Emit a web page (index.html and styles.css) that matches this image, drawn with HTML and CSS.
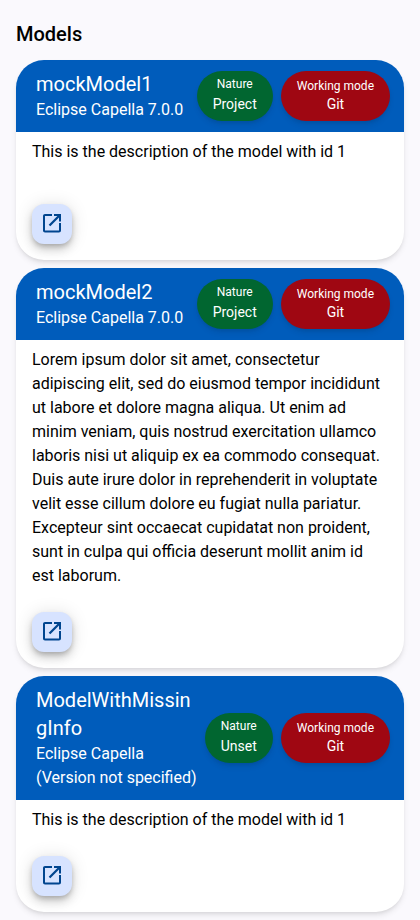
FILE: index.html
```
<!DOCTYPE html>
<html lang="en">
<head>
<meta charset="utf-8">
<title>Models</title>
<link rel="stylesheet" href="styles.css">
</head>
<body>
<svg width="0" height="0" class="sprite" aria-hidden="true">
  <symbol id="open" viewBox="0 0 24 24"><path d="M19 19.5H5V5h7V3H5c-1.11 0-2 .9-2 2v14.5c0 1.1.89 2 2 2h14c1.1 0 2-.9 2-2V12h-2v7.500zM14 3v2h3.400l-8.700 8.700 1.600 1.600L19 6.600V10.500h2V3h-7z"/></symbol>
</svg>
<main class="page">
  <h2 class="heading">Models</h2>
  <div class="list">
    <article class="card">
      <header class="head">
        <div class="info"><div class="name">mockModel1</div><div class="version">Eclipse Capella 7.0.0</div></div>
        <div class="badges">
          <div class="badge nature"><span class="label">Nature</span><span class="value">Project</span></div>
          <div class="badge mode"><span class="label">Working mode</span><span class="value">Git</span></div>
        </div>
      </header>
      <div class="body">
        <p class="text">This is the description of the model with id 1</p>
        <button class="open" aria-label="Open"><svg class="icon"><use href="#open"/></svg></button>
      </div>
    </article>
    <article class="card">
      <header class="head">
        <div class="info"><div class="name">mockModel2</div><div class="version">Eclipse Capella 7.0.0</div></div>
        <div class="badges">
          <div class="badge nature"><span class="label">Nature</span><span class="value">Project</span></div>
          <div class="badge mode"><span class="label">Working mode</span><span class="value">Git</span></div>
        </div>
      </header>
      <div class="body">
        <p class="text">Lorem ipsum dolor sit amet, consectetur adipiscing elit, sed do eiusmod tempor incididunt ut labore et dolore magna aliqua. Ut enim ad minim veniam, quis nostrud exercitation ullamco laboris nisi ut aliquip ex ea commodo consequat. Duis aute irure dolor in reprehenderit in voluptate velit esse cillum dolore eu fugiat nulla pariatur. Excepteur sint occaecat cupidatat non proident, sunt in culpa qui officia deserunt mollit anim id est laborum.</p>
        <button class="open" aria-label="Open"><svg class="icon"><use href="#open"/></svg></button>
      </div>
    </article>
    <article class="card">
      <header class="head">
        <div class="info"><div class="name">ModelWithMissingInfo</div><div class="version">Eclipse Capella (Version not specified)</div></div>
        <div class="badges">
          <div class="badge nature"><span class="label">Nature</span><span class="value">Unset</span></div>
          <div class="badge mode"><span class="label">Working mode</span><span class="value">Git</span></div>
        </div>
      </header>
      <div class="body">
        <p class="text">This is the description of the model with id 1</p>
        <button class="open" aria-label="Open"><svg class="icon"><use href="#open"/></svg></button>
      </div>
    </article>
  </div>
</main>
</body>
</html>
```
FILE: styles.css
```
* { box-sizing: border-box; }
body {
  margin: 0;
  background: #faf9fd;
  color: #000;
  font: 400 16px/24px Roboto, sans-serif;
}
.sprite { position: absolute; }
.page { padding: 20px 16px 8px; }
.heading { margin: 0 0 12px; font-size: 20px; line-height: 28px; font-weight: 500; }
.list { display: flex; flex-direction: column; gap: 8px; }
.card {
  display: flex;
  flex-direction: column;
  min-height: 200px;
  border-radius: 28px;
  background: #fff;
  box-shadow: 0 4px 6px -1px rgba(0, 0, 0, .1), 0 2px 4px -2px rgba(0, 0, 0, .1);
}
.head {
  display: flex;
  align-items: center;
  justify-content: space-between;
  gap: 8px;
  padding: 10px 14px 10px 20px;
  border-radius: 28px 28px 0 0;
  background: #005cbb;
  color: #fff;
}
.info { flex: 1; min-width: 0; }
.name { font-size: 20px; line-height: 28px; word-break: break-word; }
.badges { display: flex; gap: 8px; }
.badge {
  display: flex;
  flex-direction: column;
  align-items: center;
  height: 50px;
  padding: 5px 16px;
  border-radius: 25px;
  white-space: nowrap;
  box-shadow: 0 4px 6px -1px rgba(0, 0, 0, .1), 0 2px 4px -2px rgba(0, 0, 0, .1);
}
.nature { background: #016630; }
.mode { background: #9f0712; }
.label { font-size: 12px; line-height: 16px; }
.value { margin-top: 2px; font-size: 14px; line-height: 20px; }
.mode .label { margin-top: 2px; }
.mode .value { margin-top: 0; }
.body {
  flex: 1;
  display: flex;
  flex-direction: column;
  align-items: flex-start;
  justify-content: space-between;
  gap: 24px;
  padding: 8px 16px 16px;
}
.text { margin: 0; }
.open {
  display: flex;
  align-items: center;
  justify-content: center;
  width: 40px;
  height: 40px;
  padding: 0;
  border: 0;
  border-radius: 12px;
  background: #d7e3ff;
  color: #00458f;
  box-shadow: 0 3px 5px -1px rgba(0, 0, 0, .2), 0 6px 10px rgba(0, 0, 0, .14), 0 1px 18px rgba(0, 0, 0, .12);
}
.icon { width: 24px; height: 24px; margin-top: -2px; fill: currentColor; }
```
